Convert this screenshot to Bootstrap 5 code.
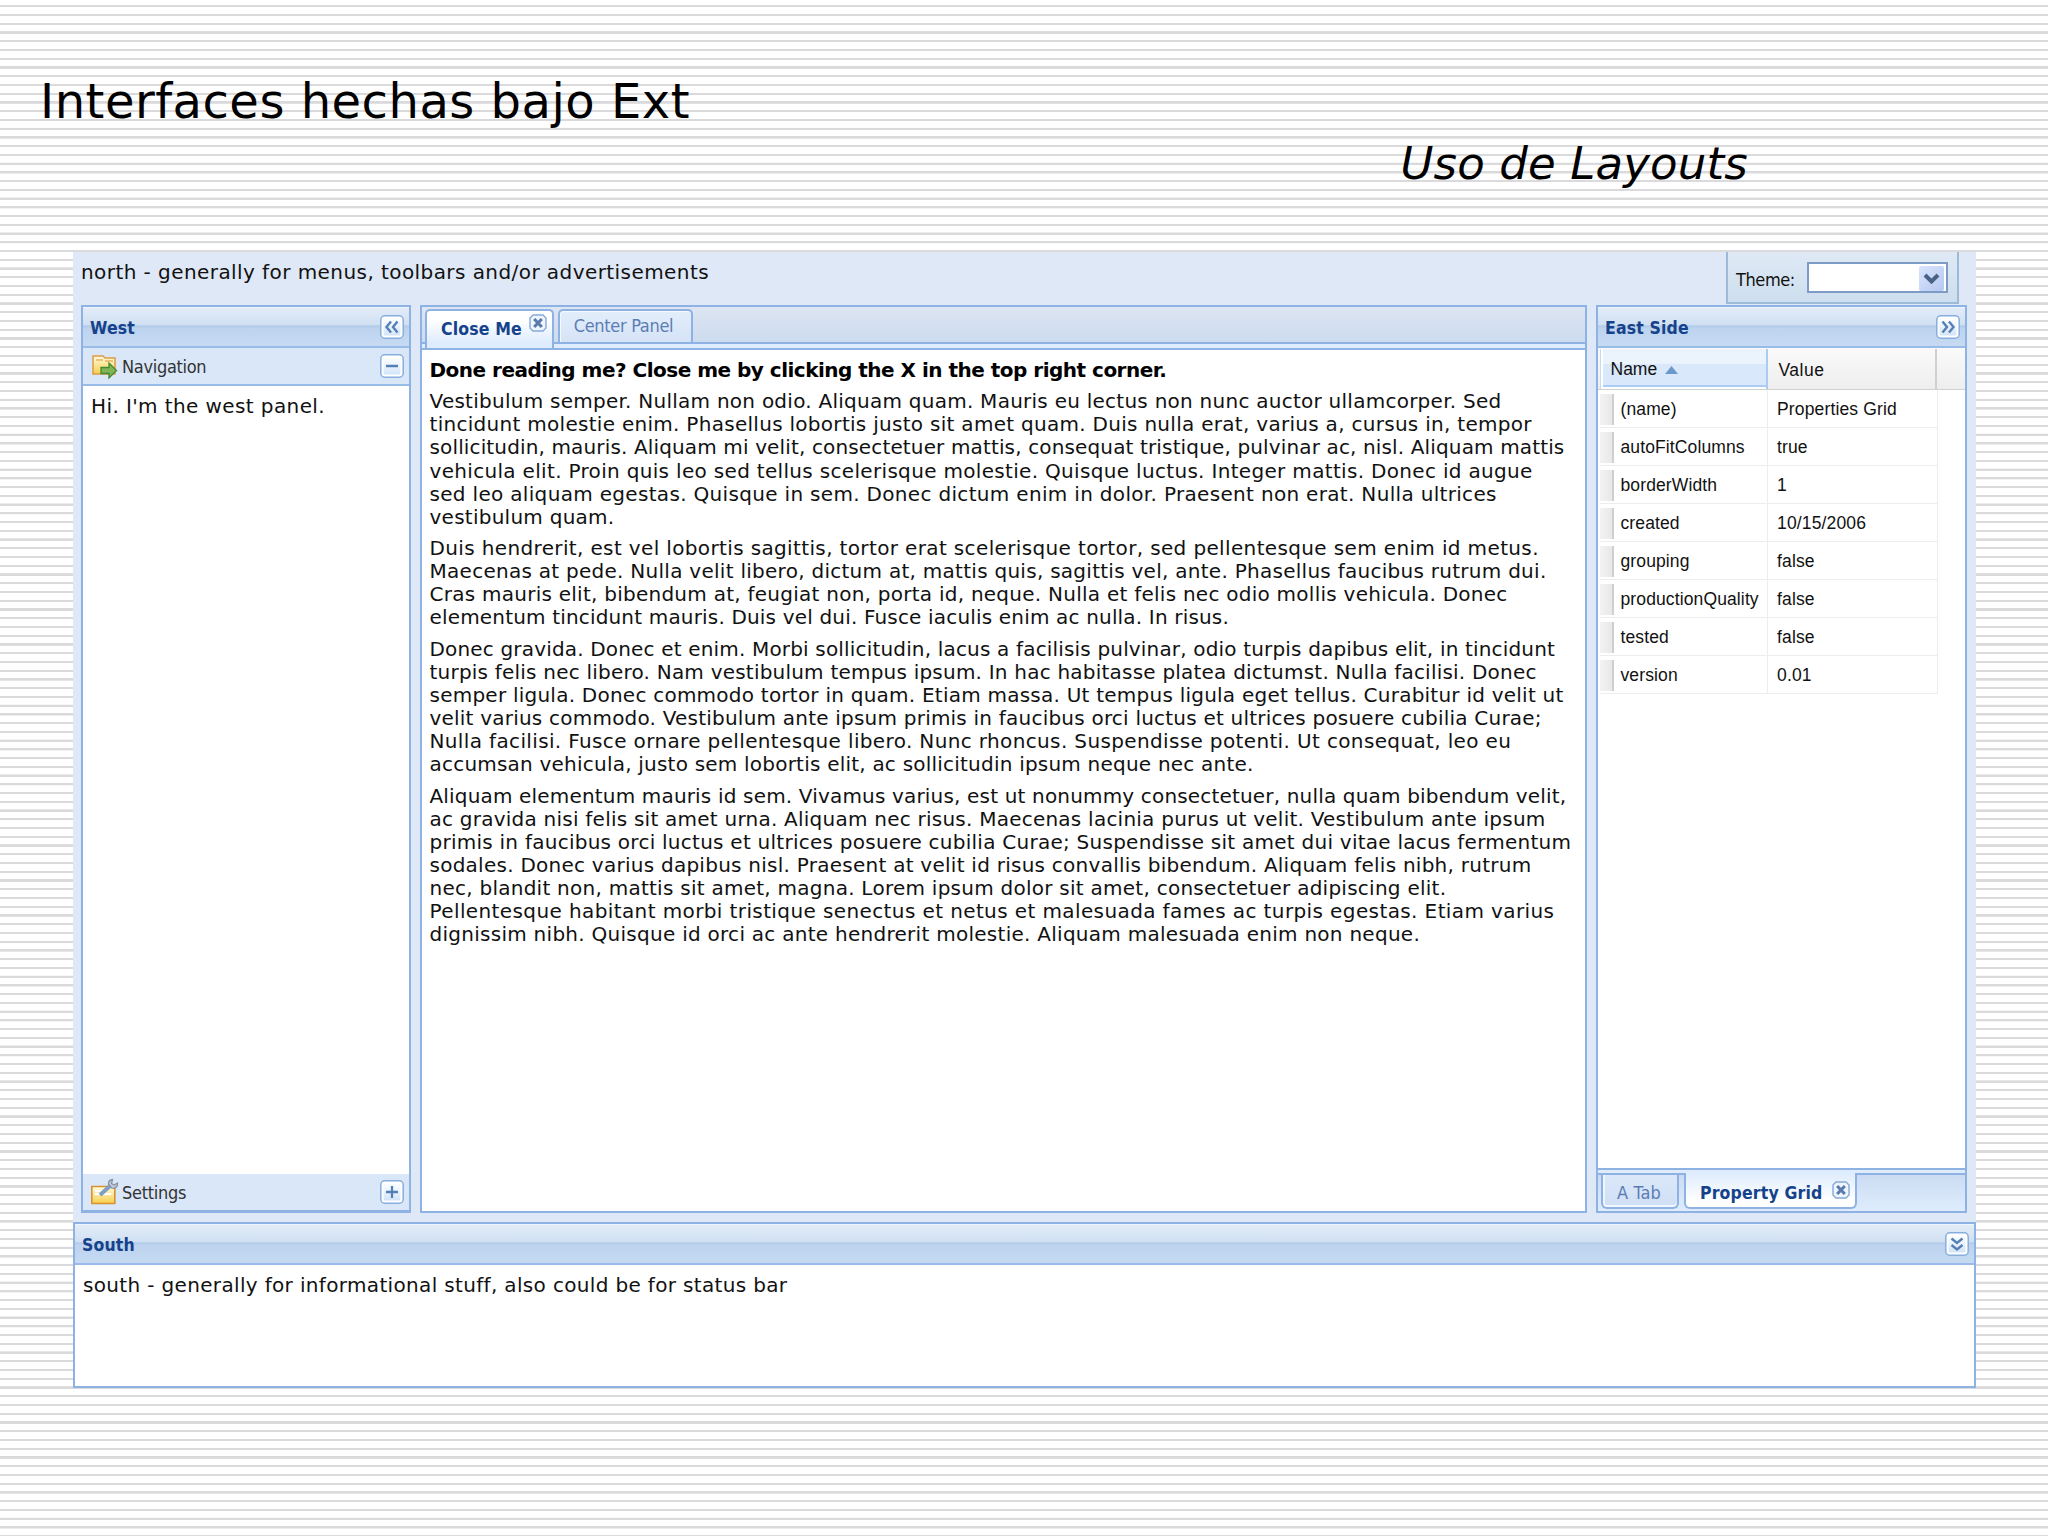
<!DOCTYPE html>
<html lang="es">
<head>
<meta charset="utf-8">
<meta name="viewport" content="width=device-width, initial-scale=1">
<title>Interfaces hechas bajo Ext</title>
<link href="https://cdn.jsdelivr.net/npm/bootstrap@5.3.0/dist/css/bootstrap.min.css" rel="stylesheet">
<style>
body{width:2048px;height:1536px;margin:0;overflow:hidden;color:#111;font:20px/23.15px "DejaVu Sans",Verdana,sans-serif;background:#fff repeating-linear-gradient(to bottom,#fff 0,#fff 5.1px,#dadadc 5.3px,#dadadc 7.3px,#fff 7.5px,#fff 8.742px)}
.slide-head{height:252px;padding:71px 0 0 40px;color:#000}
.slide-title{font-size:48px;line-height:60px;letter-spacing:.5px;margin:0;font-weight:400}
.slide-sub{font-size:45px;line-height:56px;letter-spacing:.15px;font-style:italic;margin:5px 0 0 1360.5px;font-weight:400}
.viewport{width:1903px;height:1136px;margin-left:73px;background:#dfe8f6}
.north{height:53px;padding-left:8px}
.north-text{padding-top:9px;letter-spacing:.43px}
.theme-box{width:233px;height:52px;margin-right:17px;border:solid #9dbad6;border-width:0 2px 2px;background:linear-gradient(#dfe9f5,#cddeee);padding:10px 9px 9px 8px;font-family:"DejaVu Sans Condensed",Tahoma,sans-serif;font-size:18px;letter-spacing:-.4px}
.theme-box label{padding-top:6px}
.combo{width:141px;height:31px;border:2px solid #7d9bc5;background:#fff;padding:2px}
.combo-arrow{width:25px;height:25px;background:linear-gradient(135deg,#dbe4fc,#b5c9f2);border-radius:2px}
.middle{height:908px;padding:0 9px 0 8px;gap:9px}
.ext-panel{border:2px solid #8db2e3;background:#fff}
.west{width:330px;border-bottom-width:3px}
.center{width:1167px}
.east{width:371px}
.ext-head{height:41px;flex:none;padding:1px 5px 0 7px;border-bottom:2px solid #99bbe8;background:linear-gradient(#e3edf8 0,#d0e0f2 46%,#b2cbea 48%,#bdd3ee 55%,#c6daf3 100%);box-shadow:inset 0 1px #eef5fc;color:#15428b}
.tahoma-b{font-family:"DejaVu Sans Condensed",Tahoma,sans-serif;font-weight:700;font-size:17.5px;letter-spacing:.15px;color:#15428b}
.tahoma{font-family:"DejaVu Sans Condensed",Tahoma,sans-serif;font-size:18px;letter-spacing:-.3px;color:#333}
.acc{height:36px;flex:none;background:#d9e7f8;padding:0 5px 0 8px}
.acc-nav{height:38px;border-bottom:2px solid #99bbe8}
.acc svg.ico{width:28px;height:28px;margin-right:3px}
.acc .tahoma{padding-top:2px}
.toolb{width:24px;height:24px;flex:none;display:block}
.pane-text{padding:9px 0 0 8px;letter-spacing:.4px}
.south .pane-text{letter-spacing:.34px}
.tabstrip{height:37px;background:linear-gradient(#dde6f2,#ccdbef);border-bottom:2px solid #8db2e3;padding:2px 0 0 3px;gap:4px}
.tab-on,.tab-off{border:2px solid #8db2e3;border-bottom:0;border-radius:5px 5px 0 0}
.tab-on{width:129px;height:39px;background:linear-gradient(#fff,#fff 25%,#deecfd 85%);padding:0 5px 0 14px;position:relative}
.tab-on .tahoma-b{padding-top:7px}
.tab-on .closeb{margin-top:3px}
.tab-off{width:135px;height:33px;background:linear-gradient(#e3eefb,#d5e3f6);box-shadow:inset 1px 1px #f4f9ff;color:#5c7db4;padding:3px 4px 0 0}
.stripband{height:6px;background:#deecfd;border-bottom:2px solid #8db2e3}
.closeb{width:18px;height:18px;flex:none}
.article{padding:8.6px 0 0 7.5px}
.article p{margin:0 0 8px}
.article .done{letter-spacing:-.51px;font-weight:700;margin-bottom:8.3px;color:#000}
.article .ln{display:block;white-space:nowrap}
.s14{letter-spacing:.14px}.s17{letter-spacing:.17px}.s21{letter-spacing:.215px}.s23{letter-spacing:.235px}.s25{letter-spacing:.253px}.s27{letter-spacing:.27px}.s29{letter-spacing:.287px}.s32{letter-spacing:.32px}.s36{letter-spacing:.36px}.s39{letter-spacing:.392px}
.pg{font-family:"Liberation Sans",Arial,sans-serif;font-size:17.5px;color:#111}
.pg-head{height:42px;background:linear-gradient(#fafafa,#eee);border-bottom:1.5px solid #d0d0d0;padding:1px 0 0 2px}
.pg-name{width:168px;flex:none}
.pg-head .pg-name{border-left:1.5px solid #c3daf9;border-right:2px solid #aacbf2;background:linear-gradient(#ebf3fd 0,#ebf3fd 36%,#d9e8fb 38%,#d9e8fb 100%);box-shadow:inset 2px 0 #fff,inset 0 -2px #fff,inset 0 -4px #aaccf6;padding:1px 0 0 9.5px}
.pg-head .pg-val{width:169px;border-right:2px solid #d0d0d0;padding:3px 0 0 10.5px;letter-spacing:.5px}
.pg-row{height:38px;width:338px;margin-left:2px;border-bottom:1.5px solid #ededed;border-right:1.5px solid #ededed}
.pg-row .pg-name{border-right:1.5px solid #ededed;letter-spacing:.12px;padding-top:2px}
.pg-strip{width:13.5px;height:31px;background:linear-gradient(90deg,#f3f3f3,#e8e8e8);border-right:2px solid #cfcfcf;margin-right:7px}
.pg-row .pg-val{padding:2px 0 0 9px;letter-spacing:.15px}
.bband{height:5px;background:#deecfd;border-top:2px solid #8db2e3}
.bstrip{height:38px;background:linear-gradient(#cbdcf2,#deecfd);border-top:2px solid #8db2e3;padding-left:3px;gap:5px}
.bstrip>div{border:2px solid #8db2e3;border-top:0;border-radius:0 0 6px 6px;height:34px}
.btab-off{width:78px;background:linear-gradient(#dbe8f9,#cfdff5);box-shadow:inset 0 -2px #f2f8ff,inset 2px 0 #edf5fe;padding:3px 2px 0 0}
.btab-off.tahoma{color:#5c7db4;letter-spacing:.1px}
.btab-on{width:173px;height:36px!important;margin-top:-2px;background:linear-gradient(#deecfd,#fff 80%);padding:0 5px 0 14px;position:relative}
.btab-on .tahoma-b{padding-top:9px}
.btab-on .closeb{margin-top:8px}
.south{height:166px;margin-top:9px}
</style>
<script src="https://cdn.jsdelivr.net/npm/bootstrap@5.3.0/dist/js/bootstrap.bundle.min.js"></script>
</head>
<body>
<svg width="0" height="0" class="position-absolute">
<defs>
<linearGradient id="tg" x1="0" y1="0" x2="0" y2="1"><stop offset="0" stop-color="#fdfeff"/><stop offset="1" stop-color="#d3e4f8"/></linearGradient>
<linearGradient id="fg" x1="0" y1="0" x2="0" y2="1"><stop offset="0" stop-color="#fffbe0"/><stop offset="1" stop-color="#f8cf4a"/></linearGradient>
<symbol id="frame" viewBox="0 0 24 24"><rect x=".8" y=".8" width="22.4" height="22.4" rx="4" fill="#fff" stroke="#86aede" stroke-width="1.5"/><rect x="3.5" y="3.5" width="17" height="17" rx="1.5" fill="url(#tg)"/></symbol>
<symbol id="closex" viewBox="0 0 18 18"><path d="M4 1H14L17 4V14L14 17H4L1 14V4Z" fill="#eef5fd" stroke="#86a9d8" stroke-width="1.4"/><path d="M5.2 5 12.8 13M12.8 5 5.2 13" stroke="#5a7aad" stroke-width="3.1"/></symbol>
</defs>
</svg>

<header class="slide-head">
<h1 class="slide-title">Interfaces hechas bajo Ext</h1>
<h2 class="slide-sub">Uso de Layouts</h2>
</header>

<main class="viewport">
<div class="north d-flex justify-content-between">
<div class="north-text">north - generally for menus, toolbars and/or advertisements</div>
<div class="theme-box d-flex justify-content-between">
<label>Theme:</label>
<div class="combo d-flex justify-content-end" role="combobox"><span class="combo-arrow"><svg width="25" height="25" viewBox="0 0 25 25" class="d-block"><path d="M6 9l6.5 6.5L19 9" fill="none" stroke="#4a6287" stroke-width="4"/></svg></span></div>
</div>
</div>

<div class="middle d-flex">
<section class="west ext-panel d-flex flex-column">
<div class="ext-head d-flex align-items-center justify-content-between"><span class="tahoma-b pt-1">West</span><svg class="toolb" viewBox="0 0 24 24"><use href="#frame"/><path d="M11 6.5 6.5 12l4.500 5.500M17.500 6.500 13 12l4.500 5.500" fill="none" stroke="#5580b5" stroke-width="2.400"/></svg></div>
<div class="acc acc-nav d-flex align-items-center"><svg class="ico" viewBox="0 0 28 28"><path d="M2 21V4h10l2 2h10v16H2z" fill="url(#fg)" stroke="#dd9c45" stroke-width="1.500"/><path d="M5 8h7M14 9h8" stroke="#e7b465" stroke-width="1.500"/><path d="M10 15.500h8v-4.500l7.500 7.500-7.500 7.500v-4.500h-8z" fill="#7fb557" stroke="#43892f" stroke-width="1.300"/></svg><span class="tahoma">Navigation</span><svg class="toolb ms-auto" viewBox="0 0 24 24"><use href="#frame"/><path d="M6 12h12" stroke="#5580b5" stroke-width="2.500"/></svg></div>
<div class="pane-text flex-grow-1">Hi. I'm the west panel.</div>
<div class="acc d-flex align-items-center"><svg class="ico" viewBox="0 0 28 28"><path d="M0.800 25V8.500h23v17H.8z" fill="url(#fg)" stroke="#d89230" stroke-width="1.600"/><path d="M4 13h7M4 16h16" stroke="#fff" stroke-width="2"/><path d="M9 17 19 8" stroke="#7f9fc6" stroke-width="4"/><path d="M17.500 6a4.500 4.500 0 0 1 4-4.500l-1 4 2.500 1.500 3.500-2a4.500 4.500 0 0 1-6 5z" fill="#c3ccd8" stroke="#8a93a5" stroke-width="1.300"/></svg><span class="tahoma">Settings</span><svg class="toolb ms-auto" viewBox="0 0 24 24"><use href="#frame"/><path d="M6 12h12M12 6v12" stroke="#5580b5" stroke-width="2.300"/></svg></div>
</section>

<section class="center ext-panel">
<div class="tabstrip d-flex align-items-start">
<div class="tab-on d-flex"><span class="tahoma-b">Close Me</span><svg class="closeb ms-auto"><use href="#closex"/></svg></div>
<div class="tab-off tahoma d-flex justify-content-center">Center Panel</div>
</div>
<div class="stripband"></div>
<article class="article">
<p class="done">Done reading me? Close me by clicking the X in the top right corner.</p>
<p><span class="ln s25">Vestibulum semper. Nullam non odio. Aliquam quam. Mauris eu lectus non nunc auctor ullamcorper. Sed</span>
<span class="ln s29">tincidunt molestie enim. Phasellus lobortis justo sit amet quam. Duis nulla erat, varius a, cursus in, tempor</span>
<span class="ln s14">sollicitudin, mauris. Aliquam mi velit, consectetuer mattis, consequat tristique, pulvinar ac, nisl. Aliquam mattis</span>
<span class="ln s32">vehicula elit. Proin quis leo sed tellus scelerisque molestie. Quisque luctus. Integer mattis. Donec id augue</span>
<span class="ln s32">sed leo aliquam egestas. Quisque in sem. Donec dictum enim in dolor. Praesent non erat. Nulla ultrices</span>
<span class="ln s25">vestibulum quam.</span></p>
<p><span class="ln s36">Duis hendrerit, est vel lobortis sagittis, tortor erat scelerisque tortor, sed pellentesque sem enim id metus.</span>
<span class="ln s27">Maecenas at pede. Nulla velit libero, dictum at, mattis quis, sagittis vel, ante. Phasellus faucibus rutrum dui.</span>
<span class="ln s25">Cras mauris elit, bibendum at, feugiat non, porta id, neque. Nulla et felis nec odio mollis vehicula. Donec</span>
<span class="ln s17">elementum tincidunt mauris. Duis vel dui. Fusce iaculis enim ac nulla. In risus.</span></p>
<p><span class="ln s17">Donec gravida. Donec et enim. Morbi sollicitudin, lacus a facilisis pulvinar, odio turpis dapibus elit, in tincidunt</span>
<span class="ln s21">turpis felis nec libero. Nam vestibulum tempus ipsum. In hac habitasse platea dictumst. Nulla facilisi. Donec</span>
<span class="ln s23">semper ligula. Donec commodo tortor in quam. Etiam massa. Ut tempus ligula eget tellus. Curabitur id velit ut</span>
<span class="ln s21">velit varius commodo. Vestibulum ante ipsum primis in faucibus orci luctus et ultrices posuere cubilia Curae;</span>
<span class="ln s36">Nulla facilisi. Fusce ornare pellentesque libero. Nunc rhoncus. Suspendisse potenti. Ut consequat, leo eu</span>
<span class="ln s21">accumsan vehicula, justo sem lobortis elit, ac sollicitudin ipsum neque nec ante.</span></p>
<p><span class="ln s17">Aliquam elementum mauris id sem. Vivamus varius, est ut nonummy consectetuer, nulla quam bibendum velit,</span>
<span class="ln s23">ac gravida nisi felis sit amet urna. Aliquam nec risus. Maecenas lacinia purus ut velit. Vestibulum ante ipsum</span>
<span class="ln s25">primis in faucibus orci luctus et ultrices posuere cubilia Curae; Suspendisse sit amet dui vitae lacus fermentum</span>
<span class="ln s25">sodales. Donec varius dapibus nisl. Praesent at velit id risus convallis bibendum. Aliquam felis nibh, rutrum</span>
<span class="ln s25">nec, blandit non, mattis sit amet, magna. Lorem ipsum dolor sit amet, consectetuer adipiscing elit.</span>
<span class="ln s39">Pellentesque habitant morbi tristique senectus et netus et malesuada fames ac turpis egestas. Etiam varius</span>
<span class="ln s27">dignissim nibh. Quisque id orci ac ante hendrerit molestie. Aliquam malesuada enim non neque.</span></p>
</article>
</section>

<section class="east ext-panel d-flex flex-column">
<div class="ext-head d-flex align-items-center justify-content-between"><span class="tahoma-b pt-1">East Side</span><svg class="toolb" viewBox="0 0 24 24"><use href="#frame"/><path d="M6.500 6.500 11 12l-4.500 5.500M13 6.500 17.500 12 13 17.500" fill="none" stroke="#5580b5" stroke-width="2.400"/></svg></div>
<div class="pg flex-grow-1">
<div class="pg-head d-flex"><div class="pg-name d-flex align-items-center">Name<svg width="13" height="8" viewBox="0 0 13 8" class="ms-2"><path d="M0 8 6.500 0 13 8z" fill="#6d98cb"/></svg></div><div class="pg-val d-flex align-items-center">Value</div></div>
<div class="pg-row d-flex"><div class="pg-name d-flex align-items-center"><i class="pg-strip"></i>(name)</div><div class="pg-val d-flex align-items-center">Properties Grid</div></div>
<div class="pg-row d-flex"><div class="pg-name d-flex align-items-center"><i class="pg-strip"></i>autoFitColumns</div><div class="pg-val d-flex align-items-center">true</div></div>
<div class="pg-row d-flex"><div class="pg-name d-flex align-items-center"><i class="pg-strip"></i>borderWidth</div><div class="pg-val d-flex align-items-center">1</div></div>
<div class="pg-row d-flex"><div class="pg-name d-flex align-items-center"><i class="pg-strip"></i>created</div><div class="pg-val d-flex align-items-center">10/15/2006</div></div>
<div class="pg-row d-flex"><div class="pg-name d-flex align-items-center"><i class="pg-strip"></i>grouping</div><div class="pg-val d-flex align-items-center">false</div></div>
<div class="pg-row d-flex"><div class="pg-name d-flex align-items-center"><i class="pg-strip"></i>productionQuality</div><div class="pg-val d-flex align-items-center">false</div></div>
<div class="pg-row d-flex"><div class="pg-name d-flex align-items-center"><i class="pg-strip"></i>tested</div><div class="pg-val d-flex align-items-center">false</div></div>
<div class="pg-row d-flex"><div class="pg-name d-flex align-items-center"><i class="pg-strip"></i>version</div><div class="pg-val d-flex align-items-center">0.01</div></div>
</div>
<div class="bband"></div>
<div class="bstrip d-flex">
<div class="btab-off tahoma d-flex align-items-center justify-content-center">A Tab</div>
<div class="btab-on d-flex"><span class="tahoma-b">Property Grid</span><svg class="closeb ms-auto"><use href="#closex"/></svg></div>
</div>
</section>
</div>

<section class="south ext-panel">
<div class="ext-head d-flex align-items-center justify-content-between"><span class="tahoma-b pt-1">South</span><svg class="toolb" viewBox="0 0 24 24"><use href="#frame"/><path d="M6.500 6.500 12 11l5.500-4.500M6.500 13 12 17.500l5.500-4.500" fill="none" stroke="#5580b5" stroke-width="2.400"/></svg></div>
<div class="pane-text">south - generally for informational stuff, also could be for status bar</div>
</section>
</main>
</body>
</html>
